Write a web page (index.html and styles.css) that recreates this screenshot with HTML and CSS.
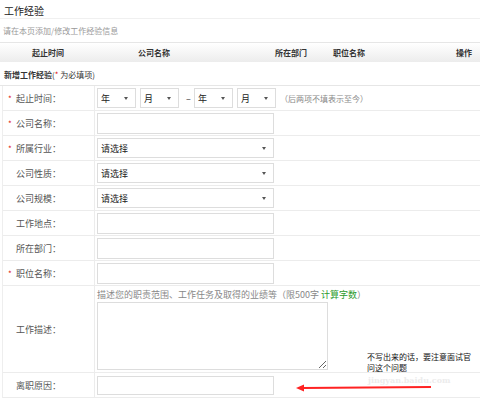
FILE: index.html
```html
<!DOCTYPE html>
<html lang="zh-CN">
<head>
<meta charset="UTF-8">
<title>工作经验</title>
<link rel="stylesheet" href="styles.css">
</head>
<body>

<div class="page">
    <div class="title">工作经验</div>
    <div class="tip">请在本页添加/修改工作经验信息</div>

    <div class="list-head">
        <span>起止时间</span>
        <span>公司名称</span>
        <span>所在部门</span>
        <span>职位名称</span>
        <span>操作</span>
    </div>

    <div class="add-head"><b>新增工作经验</b>(<i class="star">*</i> 为必填项)</div>

    <form class="exp-form">
        <div class="row">
            <label class="lab"><i class="star">*</i>起止时间：</label>
            <div class="ctl">
                <span class="sel sel-s"><select><option>年</option></select></span>
                <span class="sel sel-s"><select><option>月</option></select></span>
                <span class="dash">–</span>
                <span class="sel sel-s"><select><option>年</option></select></span>
                <span class="sel sel-s"><select><option>月</option></select></span>
                <span class="note">（后两项不填表示至今）</span>
            </div>
        </div>
        <div class="row">
            <label class="lab"><i class="star">*</i>公司名称：</label>
            <div class="ctl"><input class="txt" type="text"></div>
        </div>
        <div class="row">
            <label class="lab"><i class="star">*</i>所属行业：</label>
            <div class="ctl"><span class="sel sel-l"><select><option>请选择</option></select></span></div>
        </div>
        <div class="row">
            <label class="lab"><i class="star"></i>公司性质：</label>
            <div class="ctl"><span class="sel sel-l"><select><option>请选择</option></select></span></div>
        </div>
        <div class="row">
            <label class="lab"><i class="star"></i>公司规模：</label>
            <div class="ctl"><span class="sel sel-l"><select><option>请选择</option></select></span></div>
        </div>
        <div class="row">
            <label class="lab"><i class="star"></i>工作地点：</label>
            <div class="ctl"><input class="txt" type="text"></div>
        </div>
        <div class="row">
            <label class="lab"><i class="star"></i>所在部门：</label>
            <div class="ctl"><input class="txt" type="text"></div>
        </div>
        <div class="row">
            <label class="lab"><i class="star">*</i>职位名称：</label>
            <div class="ctl"><input class="txt" type="text"></div>
        </div>
        <div class="row row-desc">
            <label class="lab"><i class="star"></i>工作描述：</label>
            <div class="ctl ctl-desc">
                <div class="desc-tip">描述您的职责范围、工作任务及取得的业绩等（限500字 <a class="count">计算字数</a>）</div>
                <textarea class="area"></textarea>
            </div>
        </div>
        <div class="row row-last">
            <label class="lab"><i class="star"></i>离职原因：</label>
            <div class="ctl"><input class="txt txt-s" type="text"></div>
        </div>
    </form>

    <div class="mark">jingyan.baidu.com</div>
    <div class="note-pop">不写出来的话，要注意面试官<br>问这个问题</div>
    <svg class="arrow" width="140" height="10" viewBox="0 0 140 10">
        <line x1="6" y1="5" x2="135" y2="4" stroke="#f22" stroke-width="2"/>
        <polygon points="0,5 8,1.5 8,8.5" fill="#f22"/>
    </svg>
</div>

</body>
</html>
```

FILE: styles.css
```css
body {
    margin: 0;
    font-family: "Noto Sans CJK SC", "Noto Sans", sans-serif;
    color: #333;
    background: #fff;
}
.page {
    position: relative;
    width: 480px;
    height: 398px;
    overflow: hidden;
}
.title {
    height: 18px;
    line-height: 22px;
    padding-left: 4px;
    font-size: 10px;
    color: #222;
    border-bottom: 1px solid #f0f0f0;
}
.tip {
    height: 23px;
    line-height: 23px;
    padding-left: 3px;
    font-size: 8px;
    color: #999;
}
.list-head {
    display: grid;
    grid-template-columns: 106px 137px 58px 123px 1fr;
    height: 19px;
    line-height: 19px;
    padding-left: 32px;
    font-size: 8px;
    font-weight: bold;
    color: #333;
    border-top: 1px solid #e6e6e6;
    background: linear-gradient(#fff, #ececec);
}
.add-head {
    height: 23px;
    line-height: 25px;
    padding-left: 4px;
    font-size: 8px;
    color: #333;
    border-bottom: 1px solid #e6e6e6;
}
.add-head b {
    font-weight: bold;
}
.star {
    font-style: normal;
    color: #e01010;
}
.exp-form {
    margin: 0 0 0 2px;
    border-left: 1px solid #eee;
}
.row {
    display: grid;
    grid-template-columns: 92px 1fr;
    height: 24px;
    border-bottom: 1px solid #ececec;
}
.row-desc {
    height: 86px;
}
.lab {
    display: flex;
    align-items: center;
    border-right: 1px solid #ececec;
    font-size: 9px;
    color: #555;
}
.lab .star {
    width: 8px;
    padding-left: 5px;
    font-size: 8px;
}
.ctl {
    display: flex;
    align-items: center;
    padding-left: 2px;
}
.txt {
    box-sizing: border-box;
    width: 177px;
    height: 21px;
    margin: 0;
    border: 1px solid #ddd;
    outline: none;
}
.txt-s {
    height: 19px;
    margin-top: 1px;
}
.sel {
    position: relative;
    display: flex;
    height: 20px;
    margin-right: 4px;
}
.sel select {
    box-sizing: border-box;
    width: 100%;
    height: 20px;
    margin: 0;
    padding: 0 0 0 3px;
    border: 1px solid #ddd;
    background: #fff;
    font-family: inherit;
    font-size: 9px;
    color: #222;
    appearance: none;
    -webkit-appearance: none;
    outline: none;
}
.sel::after {
    content: "";
    position: absolute;
    top: 9px;
    right: 8px;
    border-left: 2.5px solid transparent;
    border-right: 2.5px solid transparent;
    border-top: 3px solid #555;
}
.sel-s {
    width: 39px;
}
.sel-l {
    width: 177px;
}
.dash {
    width: 11px;
    margin-right: 0;
    text-align: center;
    font-size: 9px;
    color: #333;
}
.note {
    margin-left: 0;
    font-size: 8px;
    color: #888;
}
.ctl-desc {
    flex-direction: column;
    align-items: flex-start;
}
.desc-tip {
    height: 16px;
    line-height: 18px;
    font-size: 9px;
    color: #888;
    white-space: nowrap;
}
.count {
    color: #2c9a2c;
}
.area {
    box-sizing: border-box;
    width: 231px;
    height: 68px;
    margin: 0;
    border: 1px solid #ddd;
    outline: none;
}
.mark {
    position: absolute;
    left: 368px;
    top: 375px;
    font-family: "DejaVu Serif", serif;
    font-size: 8px;
    font-weight: bold;
    color: #ececec;
}
.note-pop {
    position: absolute;
    left: 367px;
    top: 351px;
    font-size: 8px;
    line-height: 11px;
    color: #111;
}
.arrow {
    position: absolute;
    left: 296px;
    top: 383px;
}
```
